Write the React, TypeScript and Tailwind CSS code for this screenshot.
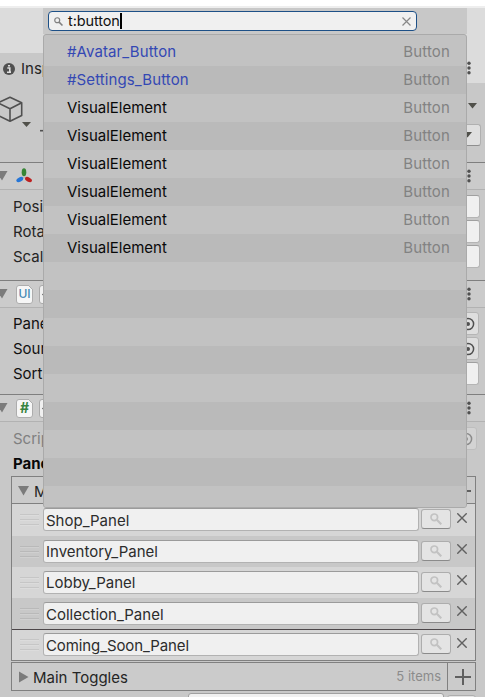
import React from 'react';

const panels = ['Shop_Panel', 'Inventory_Panel', 'Lobby_Panel', 'Collection_Panel', 'Coming_Soon_Panel'];
const results = ['#Avatar_Button', '#Settings_Button', ...Array(6).fill('VisualElement'), ...Array(9).fill('')] as string[];

function Dots() {
  return (
    <svg className="mr-[13px] ml-auto shrink-0" width="6" height="14" viewBox="0 0 6 14" fill="#505050">
      <circle cx="3" cy="2.2" r="1.7" /><circle cx="3" cy="7" r="1.7" /><circle cx="3" cy="11.7" r="1.7" />
    </svg>
  );
}

function Fold() {
  return <svg className="shrink-0" width="8" height="10"><path d="M-4 0H7.5L2 9.5Z" fill="#7b7b7b" /></svg>;
}

function SectionHeader({ children }: { children: React.ReactNode }) {
  return (
    <div className="flex h-7 shrink-0 items-center border-t border-b border-t-[#7f7f7f] border-b-[#b2b2b2] bg-[#cbcbcb]">
      <Fold />
      {children}
      <Dots />
    </div>
  );
}

function Script({ kind }: { kind: string }) {
  return (
    <>
      <div className={'relative ml-[8px] flex h-[19px] w-[17px] items-center justify-center rounded-[3px] border border-[#adadad] bg-[#f6f6f6] leading-none ' + (kind === 'UI' ? 'text-[12px] font-medium text-[#4789b4]' : 'text-[14px] font-bold text-[#388441]')}>
        {kind}
        <svg className="absolute -top-px -right-px" width="5" height="5"><path d="M0 0H5V5Z" fill="#cbcbcb" /><path d="M0 0L5 5" stroke="#adadad" /></svg>
      </div>
      <div className="ml-[6px] flex h-[19px] w-[19px] items-center rounded-[3px] border border-[#aaa] bg-[#f0f0f0] pl-[2px]">
        <svg width="12" height="10"><path d="M0.5 5L4 8.5L11 1" fill="none" stroke="#555" strokeWidth="1.5" /></svg>
      </div>
    </>
  );
}

function Field({ label, kind = 'input', className = '' }: { label: string; kind?: string; className?: string }) {
  return (
    <div className={'flex h-[25px] shrink-0 items-center pl-[13px] ' + className}>
      <span className="leading-[21px] whitespace-nowrap">{label}</span>
      {kind === 'input' && <div className="ml-auto h-[23px] w-[60px] rounded-[3px] border border-[#b5b5b5] border-t-[#a0a0a0] bg-[#f0f0f0]" />}
      {kind === 'object' && (
        <div className="ml-auto flex h-[23px] w-[20px] items-center justify-center rounded-[3px] border border-[#b5b5b5] bg-[#dedede]">
          <svg className="-ml-[3px] shrink-0" width="14" height="14"><circle cx="7" cy="7" r="5.6" fill="none" stroke="#505050" strokeWidth="1.5" /><circle cx="7" cy="7" r="2" fill="#505050" /></svg>
        </div>
      )}
    </div>
  );
}

function Magnifier({ color, size, width }: { color: string; size: number; width: number }) {
  return (
    <svg width={size} height={size} viewBox="0 0 12 12" fill="none" stroke={color}>
      <circle cx="4.3" cy="4.3" r="3.3" strokeWidth={width} /><path d="M6.8 6.8L11.3 11.3" strokeWidth={width + 0.5} />
    </svg>
  );
}

function Inspector() {
  return (
    <div className="flex h-[697px] w-[485px] flex-col bg-[#c8c8c8] text-[#252525]">
      <div className="h-[6px] shrink-0 bg-white" />
      <div className="h-[2px] shrink-0 bg-[#eeeeee]" />
      <div className="h-[45px] shrink-0 bg-[#dcdcdc]" />
      <div className="flex h-[30px] shrink-0">
        <div className="flex h-8 w-[120px] items-center pl-[3px]">
          <svg width="12" height="12"><circle cx="6" cy="6" r="6" fill="#505050" /><path d="M4.3 5H6.8V9H8M4 9.2H8M5 2.8H7" stroke="#ddd" strokeWidth="1.6" fill="none" /></svg>
          <span className="ml-[6px] leading-5">Insp</span>
        </div>
        <div className="flex flex-1 items-center bg-[#dcdcdc]"><Dots /></div>
      </div>

      <div className="flex h-[79px] shrink-0 justify-between pt-[13px]">
        <svg width="44" height="50" fill="none" stroke="#505050" strokeWidth="1.6" strokeLinejoin="round">
          <path d="M10 1.2L21.7 6.8V19.5L10 25.3L-2 19.5V6.8ZM-2 6.8L10 12.7L21.7 6.8M10 12.7V25" />
          <path d="M22 26H31L26.5 31Z" fill="#50504a" stroke="none" />
          <path d="M40 34.7H50" />
        </svg>
        <div className="flex w-[30px] flex-col pt-[7px]">
          <svg className="ml-[13px]" width="10" height="6"><path d="M0 0H9L4.5 5.5Z" fill="#50504a" /></svg>
          <div className="mt-[15px] flex h-[22px] w-[26px] items-center rounded-[3px] border border-[#b0b0b0] border-b-[#8e8e8e] bg-[#dfdfdf] pl-[7px]">
            <svg width="10" height="6"><path d="M0 0H9L4.5 5.5Z" fill="#50504a" /></svg>
          </div>
        </div>
      </div>

      <SectionHeader>
        <svg className="ml-2" width="17" height="16">
          <path d="M8 5V9L4 11M8 9L12 11" fill="none" stroke="#b8b8b8" strokeWidth="1.5" />
          <ellipse cx="8" cy="4.2" rx="2.3" ry="3.9" fill="#378535" />
          <ellipse cx="3.8" cy="11.6" rx="3.7" ry="2.2" transform="rotate(-28 3.8 11.6)" fill="#2676d7" />
          <ellipse cx="12.5" cy="11.6" rx="3.7" ry="2.2" transform="rotate(28 12.5 11.6)" fill="#bd2020" />
        </svg>
      </SectionHeader>
      <div className="flex h-[90px] shrink-0 flex-col pt-[4px] pr-[5px]">
        <Field label="Posi" /><Field label="Rota" /><Field label="Scal" />
      </div>

      <SectionHeader><Script kind="UI" /></SectionHeader>
      <div className="flex h-[86px] shrink-0 flex-col pt-[3px] pr-[6px] text-[#111]">
        <Field label="Pane" kind="object" /><Field label="Sour" kind="object" /><Field label="Sort" />
      </div>

      <SectionHeader><Script kind="#" /></SectionHeader>
      <div className="flex h-[54px] shrink-0 flex-col pt-[4px] pr-[8px]">
        <Field label="Scrip" kind="object" className="text-[#808080] [&>div]:opacity-50" />
        <Field label="Pane" kind="none" className="font-bold text-[#090909]" />
      </div>

      <div className="ml-[11px] flex h-[28px] w-[465px] shrink-0 items-center border border-[#808080] bg-[#cbcbcb] pt-[2px] pl-[6px]">
        <svg width="12" height="10"><path d="M0 0H11L5.5 9.5Z" fill="#7b7b7b" /></svg>
        <span className="ml-[4px]">M</span>
        <div className="mr-[4px] ml-auto h-[2px] w-4 bg-[#606060]" />
      </div>
      <div className="ml-[11px] flex h-[157px] w-[465px] shrink-0 flex-col border-x border-b border-[#808080]">
        {panels.map((name, i) => {
          const middle = i > 0 && i < 4;
          return (
            <div key={name} className={'flex shrink-0 items-start pl-[8px] ' + (i % 2 ? 'bg-[#c8c8c8]' : 'bg-[#d6d6d6]') + (i === 0 ? ' h-[32px] pt-[4px]' : i === 4 ? ' h-[31px] border-t border-[#4c4649] pt-[3px]' : ' h-[31px] pt-[4px]')}>
              <svg className="mt-[5px] mr-[4px] shrink-0" width="19" height="13"><path d="M0 1.5H20M0 6.5H20M0 11.5H20" stroke="#000" strokeOpacity="0.07" /><path d="M0 2.5H20M0 7.5H20M0 12.5H20" stroke="#fff" strokeOpacity="0.15" /></svg>
              <div className={'flex h-[23px] w-[376px] shrink-0 items-center rounded-[3px] border border-[#b2b2b2] border-t-[#9b9b9b] bg-[#f0f0f0] pl-[2px] text-[#2c2c2c] ' + (i === 4 ? 'tracking-[-0.1px] ' : '') + (i === 1 || i === 2 ? '' : 'pt-[1px]')}>{name}</div>
              <div className="mt-[1px] ml-[2px] flex h-[20px] w-[30px] items-center justify-center rounded-[3px] border border-[#adadad] border-b-[#8b8b8b] bg-[#e4e4e4]">
                <Magnifier color="#c2c2c2" size={12} width={1.7} />
              </div>
              <svg className={'ml-[6px] ' + (middle ? 'mt-[4px]' : 'mt-[5px]')} width="10" height="10"><path d="M0.3 0.3L9.7 9.7M9.7 0.3L0.3 9.7" stroke="#606060" strokeWidth="1.4" /></svg>
            </div>
          );
        })}
      </div>
      <div className="mt-px ml-[11px] flex h-[29px] w-[465px] shrink-0 items-center border border-[#808080] bg-[#cbcbcb] pl-[7px]">
        <svg width="10" height="12"><path d="M0 0.5L9.5 6L0 11.5Z" fill="#7b7b7b" /></svg>
        <span className="ml-[4px] pt-[1px]">Main Toggles</span>
        <span className="ml-auto text-[13px] text-[#8b8b8b]">5 items</span>
        <div className="ml-[6px] flex h-full w-[28px] items-center justify-center border-l border-[#808080] pl-[2px]">
          <svg width="16" height="16"><path d="M0 8H16M8 0V16" stroke="#606060" strokeWidth="2" /></svg>
        </div>
      </div>
      <div className="mt-[2px] ml-[188px] flex h-[4px] shrink-0 gap-[3px] overflow-hidden">
        <div className="h-[20px] w-[256px] rounded-[3px] border border-[#a0a0a0] bg-[#f0f0f0]" />
        <div className="mt-[2px] h-[20px] w-[29px] rounded-[3px] border border-[#adadad] bg-[#e4e4e4]" />
      </div>
    </div>
  );
}

export default function App() {
  return (
    <div className="relative h-[697px] w-[485px] overflow-hidden font-['Inter',sans-serif] text-[15px] leading-none">
      <Inspector />
      <div className="absolute top-[8px] left-[43px] flex w-[424px] flex-col">
        <div className="h-[26px] bg-[#c8c8c8] pt-[3px] pl-[5px]">
          <div className="flex h-[20px] w-[369px] items-center rounded-[4px] border border-[#1d5087] bg-[#f0f0f0] pr-[5px] pl-[5px] text-[#111]">
            <Magnifier color="#808080" size={9} width={1.6} />
            <span className="ml-[5px] text-[14.5px] leading-[18px] tracking-[-0.1px]">t:button</span>
            <span className="h-[16px] w-[2px] bg-black" />
            <svg className="ml-auto" width="9" height="9"><path d="M0.5 0.5L8.5 8.5M8.5 0.5L0.5 8.5" stroke="#888" strokeWidth="1.2" /></svg>
          </div>
        </div>
        <div className="flex h-[474px] flex-col overflow-hidden rounded-[3px] border border-[#aaaaaa] bg-[#c2c2c2] pt-[3px]">
          {results.map((name, i) => (
            <div key={i} className={'flex h-7 shrink-0 items-center justify-between pr-[16px] pb-[1px] pl-[23px] ' + (i % 2 ? 'bg-[#bababa] ' : 'bg-[#c2c2c2] ') + (i < 2 ? 'tracking-[0.1px] text-[#3448b4]' : 'text-[#090909]')}>
              <span>{name}</span>
              {name && <span className="tracking-[0.15px] text-[#828282]">Button</span>}
            </div>
          ))}
        </div>
      </div>
    </div>
  );
}
